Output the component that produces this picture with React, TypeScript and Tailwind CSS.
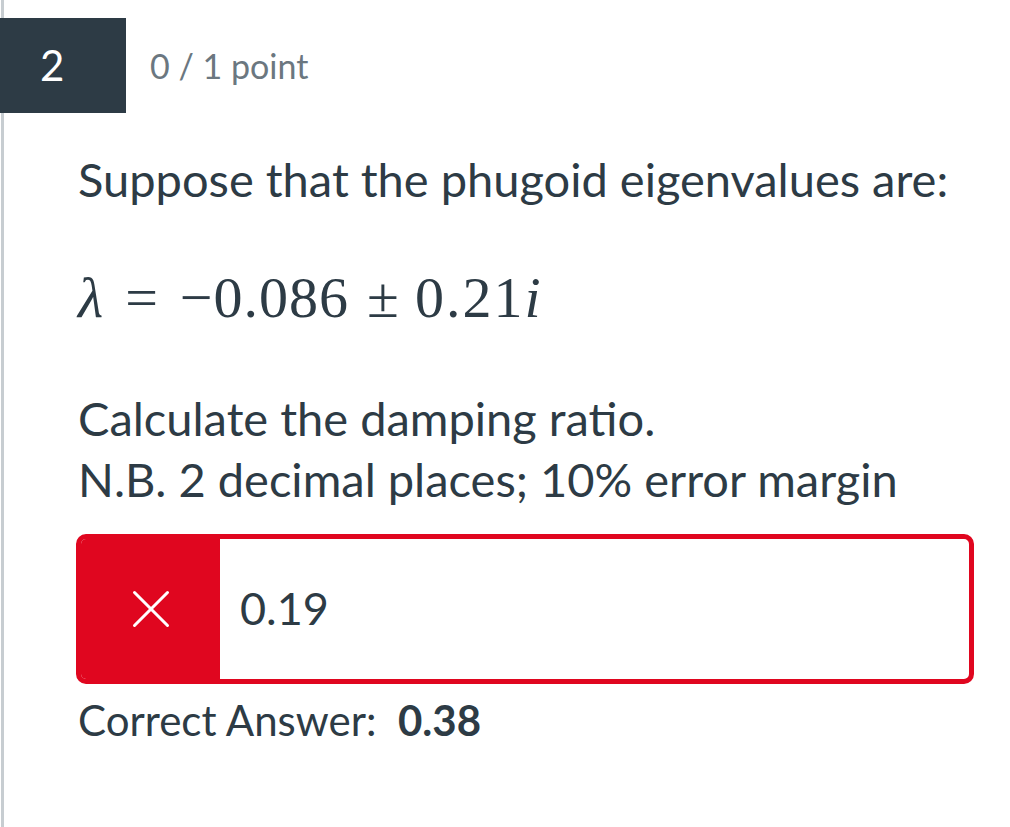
import { X } from "lucide-react";

export default function App() {
  return (
    <div className="min-h-screen bg-white pl-px font-['Lato',sans-serif] text-[#2d3b45]">
      <div className="min-h-screen border-l-[3px] border-[#c7cdd1]">
        {/* Question header */}
        <div className="flex items-center pt-[18px] -ml-[4px]">
          <div className="flex h-[95px] w-[126px] items-center bg-[#2d3b45] pl-[40px] text-[42px] text-white">
            2
          </div>
          <div className="ml-[24px] text-[34px] text-[#6b7780]">0 / 1 point</div>
        </div>

        <div className="pl-[74px] pr-[36px]">
          <p className="mt-[36px] text-[47px] leading-[61px]">Suppose that the phugoid eigenvalues are:</p>

          {/* Equation */}
          <div className="mt-[58px] flex items-baseline font-['Liberation_Serif',serif] text-[58px] leading-[60px]">
            <span className="italic">λ</span>
            <span className="mx-[22px]">=</span>
            <span className="tracking-[1px]">−0.086</span>
            <span className="ml-[18px] mr-[16px]">±</span>
            <span className="tracking-[2px]">0.21</span>
            <span className="italic">i</span>
          </div>

          <p className="mt-[60px] text-[47px] leading-[61px]">Calculate the damping ratio.</p>
          <p className="text-[47px] leading-[61px]">N.B. 2 decimal places; 10% error margin</p>

          {/* Answer */}
          <div className="mt-[24px] -ml-[2px] flex h-[150px] overflow-hidden rounded-[10px] border-[5px] border-[#e0061f]">
            <div className="flex w-[139px] items-center justify-center bg-[#e0061f]">
              <X size={66} className="text-white" strokeWidth={1.1} />
            </div>
            <div className="flex items-center pl-[20px] text-[45px]">0.19</div>
          </div>

          <p className="mt-[8px] text-[42px] leading-[56px]">
            Correct Answer:&nbsp; <span className="font-bold">0.38</span>
          </p>
        </div>
      </div>
    </div>
  );
}
